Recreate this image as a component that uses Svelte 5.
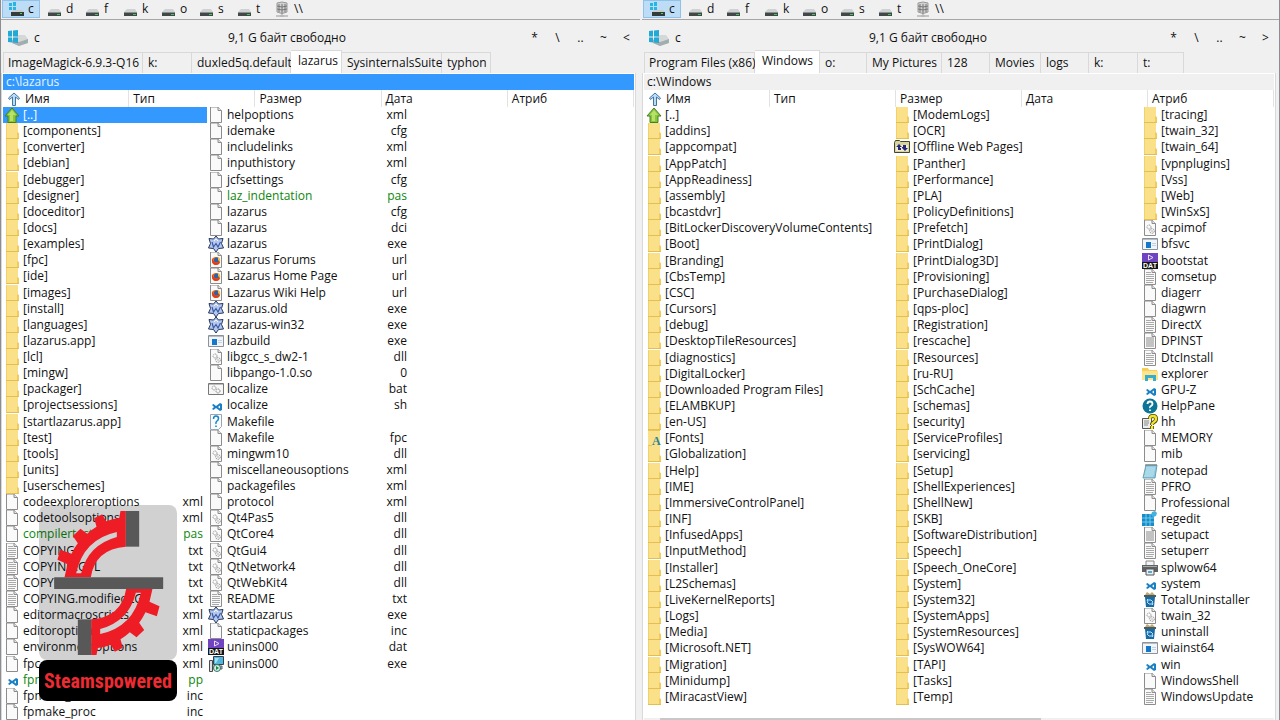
<script lang="ts">
  type Entry = { name: string; ext: string; icon: string };
  type Tab = { label: string; width: number };

  const drives = ["c", "d", "f", "k", "o", "s", "t", "\\\\"];
  const columns = ["Имя", "Тип", "Размер", "Дата", "Атриб"];

  // One entry per item: name|ext|icon
  function entries(source: string, fallback: string): Entry[] {
    return source.split(";").map((item) => {
      const [name, ext = "", icon = fallback] = item.trim().split("|");
      return { name, ext, icon };
    });
  }

  const folders = (source: string) =>
    source.split(";").map((name) => ({ name: `[${name.trim()}]`, ext: "", icon: "folder" }));

  const leftFiles: Entry[] = [
    { name: "[..]", ext: "", icon: "up" },
    ...folders(
      "components;converter;debian;debugger;designer;doceditor;docs;examples;fpc;ide;images;install;languages;lazarus.app;lcl;mingw;packager;projectsessions;startlazarus.app;test;tools;units;userschemes",
    ),
    ...entries(
      `codeexploreroptions|xml;codetoolsoptions|xml;compilertest|pas;COPYING|txt|text;COPYING.GPL|txt|text;
      COPYING|txt|text;COPYING.modifiedLG|txt|text;editormacroscripts|xml;editoroptions|xml;
      environmentoptions|xml;fpc|xml;fpmake|pp|code;fpmake_add|inc;fpmake_proc|inc;
      helpoptions|xml;idemake|cfg;includelinks|xml;inputhistory|xml;jcfsettings|cfg;laz_indentation|pas;
      lazarus|cfg;lazarus|dci;lazarus|exe|lazarus;Lazarus Forums|url|url;Lazarus Home Page|url|url;
      Lazarus Wiki Help|url|url;lazarus.old|exe|lazarus;lazarus-win32|exe|lazarus;lazbuild|exe|window;
      libgcc_s_dw2-1|dll|dll;libpango-1.0.so|0;localize|bat|bat;localize|sh|code;Makefile||question;
      Makefile|fpc;mingwm10|dll|dll;miscellaneousoptions|xml;packagefiles|xml;protocol|xml;Qt4Pas5|dll|dll;
      QtCore4|dll|dll;QtGui4|dll|dll;QtNetwork4|dll|dll;QtWebKit4|dll|dll;README|txt|text;
      startlazarus|exe|lazarus;staticpackages|inc;unins000|dat|dat;unins000|exe|setup`,
      "page",
    ),
  ];

  const rightFiles: Entry[] = [
    { name: "[..]", ext: "", icon: "up" },
    ...folders(
      "addins;appcompat;AppPatch;AppReadiness;assembly;bcastdvr;BitLockerDiscoveryVolumeContents;Boot;Branding;CbsTemp;CSC;Cursors;debug;DesktopTileResources;diagnostics;DigitalLocker;Downloaded Program Files;ELAMBKUP;en-US",
    ),
    { name: "[Fonts]", ext: "", icon: "fonts" },
    ...folders(
      "Globalization;Help;IME;ImmersiveControlPanel;INF;InfusedApps;InputMethod;Installer;L2Schemas;LiveKernelReports;Logs;Media;Microsoft.NET;Migration;Minidump;MiracastView;ModemLogs;OCR",
    ),
    { name: "[Offline Web Pages]", ext: "", icon: "offline" },
    ...folders(
      "Panther;Performance;PLA;PolicyDefinitions;Prefetch;PrintDialog;PrintDialog3D;Provisioning;PurchaseDialog;qps-ploc;Registration;rescache;Resources;ru-RU;SchCache;schemas;security;ServiceProfiles;servicing;Setup;ShellExperiences;ShellNew;SKB;SoftwareDistribution;Speech;Speech_OneCore;System;System32;SystemApps;SystemResources;SysWOW64;TAPI;Tasks;Temp;tracing;twain_32;twain_64;vpnplugins;Vss;Web;WinSxS",
    ),
    ...entries(
      `acpimof||dll;bfsvc||window;bootstat||dat;comsetup||text;diagerr;diagwrn;DirectX||text;DPINST||dense;
      DtcInstall||text;explorer||explorer;GPU-Z||code;HelpPane||help;hh||hh;MEMORY;mib;notepad||notepad;
      PFRO||text;Professional;regedit||regedit;setupact||dense;setuperr||text;splwow64||printer;
      system||code;TotalUninstaller||trash;twain_32||dll;uninstall||trash;wiainst64||window;win||code;
      WindowsShell;WindowsUpdate||text`,
      "page",
    ),
  ];

  const leftTabs: Tab[] = [
    { label: "ImageMagick-6.9.3-Q16", width: 140 },
    { label: "k:", width: 49 },
    { label: "duxled5q.default", width: 99 },
    { label: "lazarus", width: 51 },
    { label: "SysinternalsSuite", width: 100 },
    { label: "typhon", width: 49 },
  ];
  const rightTabs: Tab[] = [
    { label: "Program Files (x86)", width: 111 },
    { label: "Windows", width: 65 },
    { label: "o:", width: 47 },
    { label: "My Pictures", width: 75 },
    { label: "128", width: 48 },
    { label: "Movies", width: 51 },
    { label: "logs", width: 48 },
    { label: "k:", width: 49 },
    { label: "t:", width: 46 },
  ];

  let panes = $state([
    { side: "left", path: "c:\\lazarus", tabs: leftTabs, active: 3, files: leftFiles, nav: ["*", "\\", "..", "~", "<"] },
    { side: "right", path: "c:\\Windows", tabs: rightTabs, active: 1, files: rightFiles, nav: ["*", "\\", "..", "~", ">"] },
  ]);
  let focused = $state("left");

  const isSource = (ext: string) => ext === "pas" || ext === "pp";
</script>

{#snippet driveIcon(name: string)}
  {#if name === "c"}
    <svg class="drive-icon" viewBox="0 0 16 16" aria-hidden="true">
      <path d="M1 2h3v3H1zM5 1h3v4H5zM1 6h3v3H1zM5 6h3v3H5z" fill="#25b6e6" />
      <path d="M3 11l2-2h9l2 2v2H3z" fill="#c9cccd" />
      <path d="M3 11h13v4H3z" fill="#333b3b" />
      <path d="M12 12h2v1h-2z" fill="#3ddc5a" />
    </svg>
  {:else if name === "\\\\"}
    <svg class="drive-icon" viewBox="0 0 16 16" aria-hidden="true">
      <path d="M3 2q5-2 10 0v9q-5 3-10 0z" fill="#d2d2d2" stroke="#999" />
      <path d="M5 3v8M8 3v9M11 3v8M3 5q5 2 10 0M3 8q5 2 10 0" stroke="#777" fill="none" />
      <path d="M8 12v3M2 15h12" stroke="#999" />
      <path d="M6 14h4v2H6z" fill="#bbb" />
    </svg>
  {:else}
    <svg class="drive-icon" viewBox="0 0 16 16" aria-hidden="true">
      <path d="M2 11l3-3h8l2 3z" fill="#cfd2d2" />
      <path d="M2 11h13v4H2z" fill="#424848" />
      <path d="M2 11h13v1H2z" fill="#8b9090" />
      <path d="M11 13h3v1h-3z" fill="#41c95c" />
    </svg>
  {/if}
{/snippet}

{#snippet page()}
  <path d="M2.500 0V15.500h11V3.500L10 0z" fill="#fafafa" stroke="#8c8c8c" />
  <path d="M10 0v3.500h3.500" fill="#e6e6e6" stroke="#8c8c8c" />
{/snippet}

{#snippet fileIcon(kind: string)}
  <svg class="file-icon" viewBox="0 0 16 16" aria-hidden="true">
    {#if kind === "folder"}
      <path d="M2 0h12v16H2z" fill="#fbe08a" />
      <path d="M2 15h12v1H2zM14 10h1v6h-1z" fill="#e3bf50" />
      <path d="M13 9l2 1v5h-2z" fill="#f0cb5e" />
      <path d="M2 0h1v15H2z" fill="#f3d068" />
    {:else if kind === "fonts"}
      <path d="M2 0h12v16H2z" fill="#fbe08a" />
      <path d="M2 0h12v1H2zM2 15h4v1H2z" fill="#e8c659" />
      <text x="6" y="15" class="fonts-letter">A</text>
    {:else if kind === "up"}
      <path d="M8 1l7 8h-3v6.500H4V9H1z" fill="#8bc53f" stroke="#43821b" />
      <path d="M8 3l4 5H9v6H6V8H4z" fill="#b7e26a" />
    {:else if kind === "page"}
      {@render page()}
    {:else if kind === "text"}
      {@render page()}
      <path d="M4 5.500h8M4 7.500h8M4 9.500h8M4 11.500h8M4 13.500h7M4 3.500h5" stroke="#a9a9a9" />
    {:else if kind === "dense"}
      {@render page()}
      <path d="M4 4h8v10H4z" fill="#c2c2c2" />
    {:else if kind === "dll"}
      {@render page()}
      <circle cx="7" cy="7" r="2" fill="none" stroke="#9a9a9a" stroke-dasharray="1.500 .6" />
      <circle cx="10" cy="11" r="2.300" fill="none" stroke="#8d8d8d" stroke-dasharray="1.500 .6" />
      <circle cx="10" cy="11" r=".7" fill="#999" />
    {:else if kind === "bat"}
      <path d="M.5 2.500h15v11H.5z" fill="#f7f7f7" stroke="#777" />
      <path d="M1 3h14v1H1z" fill="#bbb" />
      <circle cx="6" cy="7" r="2" fill="none" stroke="#999" stroke-dasharray="1.500 .6" />
      <circle cx="10" cy="10" r="2" fill="none" stroke="#888" stroke-dasharray="1.500 .6" />
    {:else if kind === "window"}
      <path d="M.5 2.500h15v11H.5z" fill="#f2f5f7" stroke="#8b9299" />
      <path d="M1 3h14v1H1z" fill="#b6bdc4" />
      <path d="M4 6h5v6H4z" fill="#1477c9" />
      <path d="M10 7h4v1h-4zM10 9h4v1h-4z" fill="#c2d3e0" />
    {:else if kind === "lazarus"}
      <path
        d="M8 0l2.500 3 4.500-.5-1.500 5L15.500 12l-5 .5L8 16l-2.500-3.500-5-.5 2-4.500L1 2.500l4.500.5z"
        fill="#b4c8ee"
        stroke="#24365f"
      />
      <path d="M4 6l1.500 5L8 7.500l2 3.500 2.500-5" fill="none" stroke="#3a5aa5" stroke-width="1.200" />
      <path d="M6 5l2-2 2 2" fill="none" stroke="#f4f7ff" />
    {:else if kind === "url"}
      {@render page()}
      <circle cx="8" cy="9" r="4" fill="#e86a17" />
      <circle cx="8.500" cy="8" r="2.500" fill="#2b62ac" />
      <path d="M4 6q-1 5 3 7 5 0 5-4-3 3-5 1-2-1-3-4z" fill="#e23d16" />
      <path d="M10 5q3 2 2 5l-2-2z" fill="#f8b936" />
    {:else if kind === "code"}
      <path
        d="M12 6l2 1v6l-2 1-4-3-2.500 2L4 12l2-2-2-2 1.500-1L8 9zM12 8.500L10 10l2 1.500z"
        fill="#1b7fc4"
        fill-rule="evenodd"
      />
    {:else if kind === "question"}
      <path d="M2.500 .5h11v12l-3 3h-8z" fill="#f8fcff" stroke="#9ba5ad" />
      <path d="M5.500 5q0-3 2.500-3t2.500 2.500Q10.500 6 9 7T8 10M8 11.500V13" fill="none" stroke="#1683c4" stroke-width="1.500" />
    {:else if kind === "dat"}
      <path d="M0 0h16v9H0z" fill="#7044c0" />
      <path d="M6.500 2v5L11 4.500z" fill="none" stroke="#e8dcff" />
      <path d="M0 9h16v7H0z" fill="#141414" />
      <text x="8" y="15" class="dat-letters">DAT</text>
    {:else if kind === "setup"}
      <path d="M5.500 .5h10v8h-10z" fill="#52b5dc" stroke="#33414d" />
      <path d="M7 2h4l-3 5H7z" fill="#a6def2" />
      <path d="M4 10h10v3H4z" fill="#b3bbc0" stroke="#59656d" />
      <path d="M1.500 4.500h3v11h-3z" fill="#d9dfe2" stroke="#4a4a4a" />
      <circle cx="9" cy="12" r="3.500" fill="#d5eee1" stroke="#32736c" />
      <path d="M8 10v4l3-2z" fill="#128a47" />
    {:else if kind === "offline"}
      <path d="M.5 3.500l1-2h4l1 1h9v11H.5z" fill="#d8d59c" stroke="#45452f" />
      <path d="M2 6h12v6H2z" fill="#f0efd0" />
      <path d="M5 5L2 8h2v3h3V9H6V8h2zM9 6v2H8v1l3 3 3-3h-2V6z" fill="#25267c" />
    {:else if kind === "explorer"}
      <path d="M0 2h6l1 2h8v10H0z" fill="#f6cf57" />
      <path d="M0 5h16v9H0z" fill="#ffe48c" />
      <path d="M3 15V9h11v6h-3v-3H6v3z" fill="#35acd1" />
    {:else if kind === "help"}
      <circle cx="8" cy="8" r="7.500" fill="#0b7497" />
      <path d="M5.500 6q0-2.500 2.500-2.500T10.500 6Q10.500 7 9 8T8 10M8 11.500v1.500" fill="none" stroke="#fff" stroke-width="1.800" />
    {:else if kind === "hh"}
      <path d="M.5 4.500h9v10h-9z" fill="#eee" stroke="#555" />
      <path d="M2 7h5M2 9h5M2 11h4" stroke="#888" />
      <path d="M8 5q0-3 3-3t3 3q0 2-2 3t-2 3M10 12v3" fill="none" stroke="#4e4a00" stroke-width="4" />
      <path d="M8 5q0-3 3-3t3 3q0 2-2 3t-2 3M10 12v3" fill="none" stroke="#f4e52b" stroke-width="2.400" />
    {:else if kind === "notepad"}
      <path d="M4 2h11l-2 13H1z" fill="#8fcbe2" stroke="#679eaf" />
      <path d="M4 5h9M4 7h9M3 9h9M3 11h9M2 13h9" stroke="#c3e6f0" />
      <path d="M4 1v2M6 1v2M8 1v2M10 1v2M12 1v2M14 1v2" stroke="#777" />
    {:else if kind === "regedit"}
      <path d="M0 3h12v12H0z" fill="#168cc9" />
      <path d="M10 1l3-1 2 2-1 3-3 1-2-2z" fill="#45b1dd" />
      <path d="M0 7h12M0 11h12M4 3v12M8 3v12" stroke="#73c9eb" />
    {:else if kind === "printer"}
      <path d="M4 1h8v5H4z" fill="#f4f4f4" stroke="#888" />
      <path d="M0 5h16v7H0z" fill="#5f6264" />
      <path d="M1 6h14v1H1z" fill="#a9a9a9" />
      <path d="M4 9h8v6H4z" fill="#e8eef1" stroke="#555" />
      <path d="M6 11h4v2H6z" fill="#55aacb" />
    {:else if kind === "trash"}
      <path d="M3 3l2-3 3 2 2-2 3 3z" fill="#c0a76d" />
      <path d="M2 3h12v2H2z" fill="#4b5a65" />
      <path d="M3 5h10l-1 10H4z" fill="#176ba5" />
      <path d="M5 8h4l2 2M11 12H7l-2-2M6 7L5 8l1 2M10 13l1-1-1-2" fill="none" stroke="#b9e5ff" />
    {/if}
  </svg>
{/snippet}

<main class="commander">
  {#each panes as pane}
    <section class="pane {pane.side}" aria-label={pane.path}>
      <div class="drives">
        {#each drives as drive}
          <button class="drive" class:current={drive === "c"}>
            {@render driveIcon(drive)}<span>{drive}</span>
          </button>
        {/each}
      </div>

      <div class="volume">
        <button class="volume-name">
          <svg class="volume-icon" viewBox="0 0 20 16" aria-hidden="true">
            <path d="M4 9l5-4h8l3 4v4l-9 3-7-3z" fill="#d5d8d9" />
            <path d="M4 10l7 2 9-3v4l-9 3-7-3z" fill="#a6adb0" />
            <path d="M0 1l4-.5v6H0zM5 .5L10 0v6.500H5zM0 7.500h4v5L0 12zM5 7.500h5V13l-5-.5z" fill="#22a9d5" />
            <path d="M16 12l2-1v1l-2 1z" fill="#63c78b" />
          </svg>
          <span>c</span>
        </button>
        <span class="free">9,1 G байт свободно</span>
        <div class="nav">
          {#each pane.nav as label}
            <button>{label}</button>
          {/each}
        </div>
      </div>

      <div class="tabs" role="tablist">
        {#each pane.tabs as tab, i}
          <button
            class="tab"
            class:active={i === pane.active}
            role="tab"
            aria-selected={i === pane.active}
            style:width="{tab.width}px"
            onclick={() => (pane.active = i)}>{tab.label}</button
          >
        {/each}
      </div>

      <div class="panel">
        <button class="path" class:focused={focused === pane.side} onclick={() => (focused = pane.side)}>
          {pane.path}
        </button>

        <div class="columns">
          {#each columns as column, i}
            <button class="column">
              {#if i === 0}
                <svg class="sort" viewBox="0 0 14 14" aria-hidden="true">
                  <path d="M7 1l5.500 5-1 1.500L8.500 5v8.500h-3V5l-3 2.500-1-1.500z" fill="#b9dcf7" stroke="#42769f" />
                </svg>
              {/if}
              {column}
            </button>
          {/each}
        </div>

        <ul class="files">
          {#each pane.files as file, i}
            <li class="file" class:selected={focused === pane.side && i === 0} class:source={isSource(file.ext)}>
              {@render fileIcon(file.icon)}
              <span class="name">{file.name}</span>
              <span class="ext">{file.ext}</span>
            </li>
          {/each}
        </ul>

        {#if pane.side === "right"}
          <div class="scrollbar"><div class="thumb"></div></div>
        {/if}
      </div>
    </section>
  {/each}

  <!-- Channel mark laid over the left pane; the slits in the gear are see-through -->
  <aside class="brand">
    <div class="emblem">
      <svg viewBox="117 45 410 465" aria-hidden="true">
        <g id="half">
          <path
            d="M377 63H361L357 84Q337 86 318 94L306 73 282 85 289 110Q274 119 261 131L241 116 218 138 233 160Q222 174 214 191L180 179 172 209 202 223 193 262H272Q285 177 377 170ZM228 250Q250 148 350 126V141Q263 165 243 250Z"
            fill="#ee1c25"
            fill-rule="evenodd"
          />
          <path d="M377 63H417V170H377Z" fill="#585858" />
        </g>
        <use href="#half" transform="rotate(180 325 279)" />
        <path d="M162 262H489V297H162Z" fill="#585858" />
      </svg>
    </div>
    <div class="brand-name">Steamspowered</div>
  </aside>
</main>

<style>
  :global(body) {
    background: #f0f0f0;
  }

  .commander {
    position: relative;
    display: grid;
    grid-template-columns: 1fr 1fr;
    height: 100vh;
    min-height: 640px;
    overflow: hidden;
    font-family: "Open Sans", "Noto Sans", sans-serif;
    font-size: 12px;
    line-height: 16px;
    color: #111;
  }

  button {
    margin: 0;
    padding: 0;
    border: none;
    background: transparent;
    font: inherit;
    color: inherit;
    text-align: left;
    white-space: nowrap;
  }

  .pane {
    display: flex;
    flex-direction: column;
    min-width: 0;
    min-height: 0;
    border-left: 1px solid #8a8d92;
  }

  .pane.right {
    border-left: 2px solid #f0f0f0;
    border-right: 1px solid #8a8d92;
  }

  .drives {
    display: flex;
    flex: none;
    height: 19px;
    padding-left: 1px;
    border-bottom: 1px solid #a6a6a6;
  }

  .drive {
    display: flex;
    align-items: center;
    gap: 4px;
    width: 38px;
    height: 18px;
    padding: 0 0 1px 6px;
    box-sizing: border-box;
  }

  .drive.current {
    background: #bddcf5;
    outline: 1px solid #8fc2ea;
    outline-offset: -1px;
  }

  .drive-icon {
    flex: none;
    width: 16px;
    height: 16px;
  }

  .volume {
    display: flex;
    flex: none;
    align-items: center;
    height: 30px;
    padding: 5px 2px 0 7px;
    box-sizing: border-box;
  }

  .volume-name {
    display: flex;
    align-items: center;
    gap: 6px;
    width: 220px;
  }

  .volume-icon {
    width: 20px;
    height: 16px;
  }

  .nav {
    display: flex;
    margin-left: auto;
  }

  .nav button {
    width: 23px;
    text-align: center;
  }

  .tabs {
    display: flex;
    flex: none;
    align-items: flex-end;
    height: 23px;
    padding-left: 2px;
  }

  .tab {
    flex: none;
    height: 21px;
    padding-left: 5px;
    box-sizing: border-box;
    border: 1px solid #d9d9d9;
    border-width: 1px 1px 0 0;
  }

  .tab:first-child {
    padding-left: 4px;
    border-left-width: 1px;
  }

  .tab.active {
    height: 23px;
    padding: 0 0 2px 7px;
    background: #fff;
  }

  .panel {
    display: flex;
    flex: 1;
    flex-direction: column;
    min-height: 0;
    margin: 0 4px 0 0;
    padding: 1px 1px 0;
    background: #fff;
    border: 1px solid #d9d9d9;
    border-width: 0 1px;
  }

  .right .panel {
    margin-right: 3px;
  }

  .path {
    flex: none;
    height: 16px;
    padding-left: 3px;
    line-height: 16px;
    background: #f0f0f0;
  }

  .path.focused {
    background: #3399ff;
    color: #e8f4ff;
  }

  .columns {
    display: grid;
    flex: none;
    grid-template-columns: repeat(5, 1fr);
    height: 17px;
  }

  .column {
    display: flex;
    align-items: center;
    gap: 4px;
    padding-left: 4px;
    border-right: 1px solid #e2e2e2;
    line-height: 17px;
  }

  .sort {
    width: 14px;
    height: 14px;
  }

  .files {
    display: grid;
    flex: 1;
    grid-auto-flow: column;
    grid-template-rows: repeat(38, 1fr);
    grid-auto-columns: 204px;
    min-height: 0;
    margin: 0;
    padding: 0;
    list-style: none;
  }

  .right .files {
    grid-template-rows: repeat(37, 1fr);
    grid-auto-columns: 248px;
  }

  .file {
    display: flex;
    align-items: center;
    gap: 3px;
    min-height: 0;
    padding: 0 4px 0 1px;
    white-space: nowrap;
  }

  .right .file {
    padding-left: 2px;
  }

  .file.selected {
    background: #3399ff;
    color: #fff;
  }

  .file.source {
    color: #0c870c;
  }

  .file-icon {
    flex: none;
    width: 16px;
    height: 16px;
  }

  .ext {
    margin-left: auto;
  }

  .fonts-letter {
    font: bold 12px "Liberation Serif", serif;
    fill: #2a8594;
  }

  .dat-letters {
    font: bold 7px "Liberation Sans", sans-serif;
    fill: #fff;
    text-anchor: middle;
  }

  .scrollbar {
    flex: none;
    height: 2px;
    margin-top: 13px;
    padding-left: 16px;
    background: #f0f0f0;
  }

  .thumb {
    width: 62%;
    height: 2px;
    background: #c8c8c8;
  }

  .brand {
    position: absolute;
    left: 39px;
    bottom: 19px;
    width: 138px;
  }

  .emblem {
    height: 155px;
    border-radius: 8px;
    background: rgba(0, 0, 0, 0.18);
  }

  .emblem svg {
    display: block;
    width: 137px;
    height: 155px;
  }

  .brand-name {
    height: 41px;
    border-radius: 8px;
    background: #000;
    color: #ee2a33;
    font-family: "Liberation Sans Narrow", "Roboto Condensed", Roboto, sans-serif;
    font-size: 20px;
    font-weight: 700;
    line-height: 42px;
    text-align: center;
  }
</style>
